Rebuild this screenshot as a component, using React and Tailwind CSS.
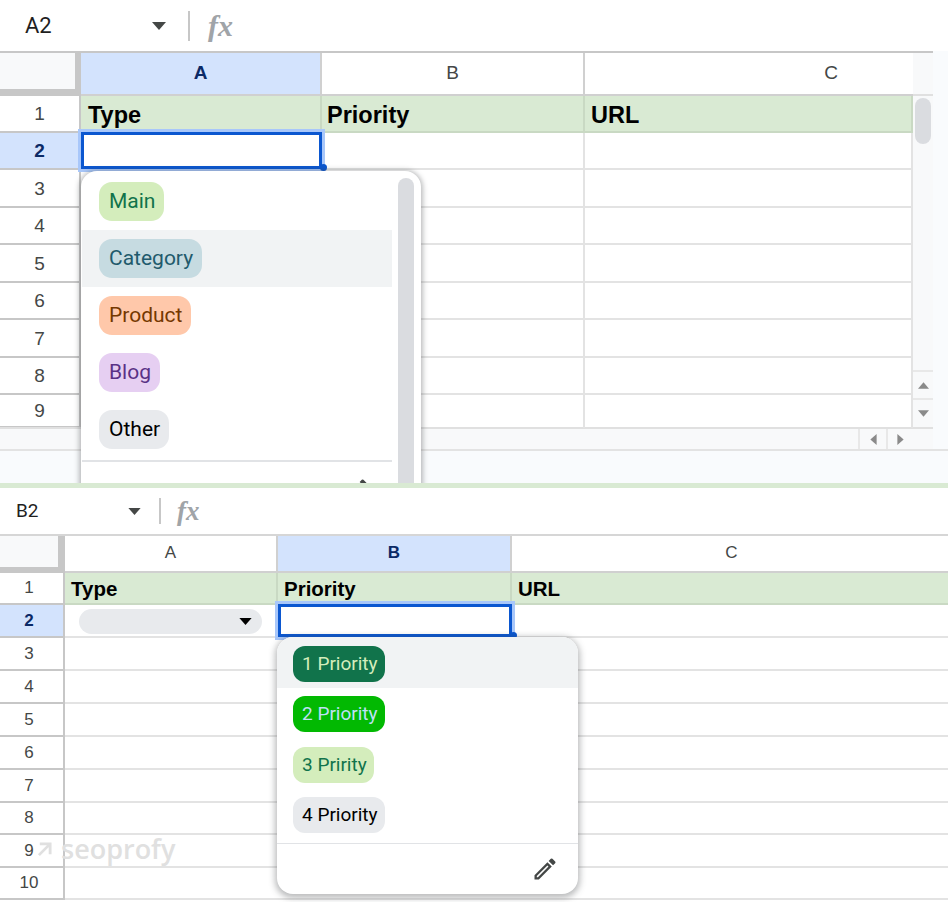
const sans = "font-['Roboto',sans-serif]";
const arial = "font-['Liberation_Sans',Arial,sans-serif]";

const topRows = [
  { n: 1, h: "h-[37px]" },
  { n: 2, h: "h-[37px]" },
  { n: 3, h: "h-[38px]" },
  { n: 4, h: "h-[37px]" },
  { n: 5, h: "h-[38px]" },
  { n: 6, h: "h-[37px]" },
  { n: 7, h: "h-[38px]" },
  { n: 8, h: "h-[37px]" },
  { n: 9, h: "h-[33px]" },
];

const bottomRows = [
  { n: 1, h: "h-[32px]" },
  { n: 2, h: "h-[33px]" },
  { n: 3, h: "h-[33px]" },
  { n: 4, h: "h-[33px]" },
  { n: 5, h: "h-[33px]" },
  { n: 6, h: "h-[33px]" },
  { n: 7, h: "h-[33px]" },
  { n: 8, h: "h-[32px]" },
  { n: 9, h: "h-[33px]" },
  { n: 10, h: "h-[32px]" },
];

const typeOptions = [
  { label: "Main", chip: "bg-[#d4edbc] text-[#11734b]" },
  { label: "Category", chip: "bg-[#c6dbe1] text-[#215a6c]", hover: true },
  { label: "Product", chip: "bg-[#ffc8aa] text-[#753800]" },
  { label: "Blog", chip: "bg-[#e6cff2] text-[#5a3286]" },
  { label: "Other", chip: "bg-[#e8eaed] text-black" },
];

const priorityOptions = [
  { label: "1 Priority", chip: "bg-[#11734b] text-[#d4edbc]", hover: true },
  { label: "2 Priority", chip: "bg-[#02b902] text-[#bfe1f6]" },
  { label: "3 Pririty", chip: "bg-[#d4edbc] text-[#11734b]" },
  { label: "4 Priority", chip: "bg-[#e8eaed] text-black" },
];

function Caret({ className, fill = "#444746" }) {
  return (
    <svg viewBox="0 0 14 8" className={className}>
      <polygon points="0,0 14,0 7,8" fill={fill} />
    </svg>
  );
}

function PencilIcon({ className }) {
  return (
    <svg viewBox="0 0 24 24" className={className} fill="#444746">
      <path d="M3 17.25V21h3.75L17.81 9.94l-3.75-3.75L3 17.25zM5.92 19H5v-.92l9.06-9.06.92.92L5.92 19zM20.71 5.63l-2.34-2.34a.996.996 0 0 0-1.41 0l-1.83 1.83 3.75 3.75 1.83-1.83a.996.996 0 0 0 0-1.41z" />
    </svg>
  );
}

function FormulaBar({ name, height, nameBox, nameText, caretGap, fxText, divider }) {
  return (
    <div className={`flex items-center bg-white shrink-0 ${height}`}>
      <div className={`flex items-center ${nameBox}`}>
        <span className={`${sans} text-[#1f1f1f] ${nameText}`}>{name}</span>
      </div>
      <Caret className={`shrink-0 ${caretGap}`} />
      <div className={`bg-[#c7c7c7] w-[2px] shrink-0 ${divider}`} />
      <span className={`font-['Liberation_Serif',serif] italic font-bold text-[#a0a4a8] ${fxText}`}>fx</span>
    </div>
  );
}

function Selection({ className }) {
  return (
    <div className={`absolute left-0 -top-[1px] -bottom-[1px] z-10 border-[3px] border-[#0b57d0] ring-[3px] ring-[#a8c7fa] bg-white ${className}`}>
      <div className="absolute -right-[8px] -bottom-[5px] w-[7px] h-[7px] rounded-full bg-[#0b57d0]" />
    </div>
  );
}

function Chip({ option, className }) {
  return <span className={`inline-flex items-center ${sans} ${option.chip} ${className}`}>{option.label}</span>;
}

function TypeDropdown() {
  return (
    <div className="absolute left-[81px] top-[171px] z-20 w-[340px] h-[340px] bg-white rounded-2xl shadow-[0_1px_5px_2px_rgba(60,64,67,0.35)] flex">
      <div className="w-[310px] pt-[2px] ml-[1px]">
        {typeOptions.map((o) => (
          <div key={o.label} className={`h-[57px] flex items-center pl-[17px] ${o.hover ? "bg-[#f1f3f4]" : ""}`}>
            <Chip option={o} className="h-[39px] pl-[10px] pr-[9px] rounded-[13px] text-[21px]" />
          </div>
        ))}
        <div className="mt-[2px] border-t-2 border-[#e1e3e6] h-[60px] relative">
          <PencilIcon className="absolute right-[22px] top-[14px] w-[28px] h-[28px]" />
        </div>
      </div>
      <div className="ml-[6px] mt-[7px] w-[16px] h-[330px] rounded-lg bg-[#dadce0]" />
    </div>
  );
}

function PriorityDropdown() {
  return (
    <div className="absolute left-[277px] top-[149px] z-20 w-[301px] h-[257px] bg-white rounded-2xl shadow-[0_2px_6px_2px_rgba(60,64,67,0.35)] flex flex-col overflow-hidden">
      {priorityOptions.map((o) => (
        <div key={o.label} className={`h-[50.5px] flex items-center pl-[16px] pt-[3px] ${o.hover ? "bg-[#f1f3f4]" : ""}`}>
          <Chip option={o} className="h-[36px] pl-[9px] pr-[7px] rounded-[12px] text-[19px]" />
        </div>
      ))}
      <div className="mt-[4px] border-t border-[#e1e3e6] flex-1 flex items-center justify-end pr-[19px]">
        <PencilIcon className="w-[28px] h-[28px]" />
      </div>
    </div>
  );
}

function TopSheet() {
  const cols = [
    { w: "w-[241px]", pl: "pl-[7px]", name: "Type" },
    { w: "w-[263px]", pl: "pl-[5px]", name: "Priority" },
    { w: "w-[328px]", pl: "pl-[6px]", name: "URL" },
  ];
  return (
    <div className="relative h-[483px] overflow-hidden bg-[#f9fbfd] flex flex-col">
      <FormulaBar
        name="A2"
        height="h-[51px]"
        nameBox="w-[152px] pl-[25px]"
        nameText="text-[22px]"
        caretGap="w-[14px] h-[8px] mr-[22px]"
        divider="h-[30px] mr-[18px]"
        fxText="text-[30px]"
      />
      <div className="flex flex-1 min-h-0 border-t-2 border-[#c7c7c7] mr-[15px]">
        <div className="w-[913px] shrink-0 bg-white">
          <div className={`flex h-[43px] ${arial}`}>
            <div className="w-[81px] bg-[#c7c7c7] h-full">
              <div className="w-[75px] h-[36px] bg-[#f8f9fa]" />
            </div>
            <div className={`${cols[0].w} bg-[#d3e3fd] border-r-2 border-b-2 border-[#d0d0d0] flex items-center justify-center font-bold text-[#0b2a66] text-[19px]`}>A</div>
            <div className={`${cols[1].w} border-r-2 border-b-2 border-[#d0d0d0] flex items-center justify-center text-[#444746] text-[19px]`}>B</div>
            <div className={`${cols[2].w} border-b-2 border-[#d0d0d0] flex items-center justify-center text-[#444746] text-[19px]`}>
              <span className="ml-[164px]">C</span>
            </div>
          </div>
          {topRows.map((r) => (
            <div key={r.n} className={`flex ${r.h} ${arial}`}>
              <div className={`w-[81px] shrink-0 flex items-center justify-center pt-[2px] border-r-2 border-b-2 border-[#c7c7c7] text-[19px] ${r.n === 2 ? "bg-[#d3e3fd] font-bold text-[#0b2a66]" : "bg-white text-[#444746]"}`}>
                {r.n}
              </div>
              {cols.map((c, i) => (
                <div
                  key={c.name}
                  className={`${c.w} ${c.pl} relative flex items-end border-r-2 ${r.n === 1 ? "bg-[#d9ead3] border-[#c9d9c3] border-b-2 font-bold text-black text-[23.5px] leading-[32px]" : `border-[#e3e3e3] ${r.n === 9 ? "" : "border-b-2"}`}`}
                >
                  {r.n === 1 && c.name}
                  {r.n === 2 && i === 0 && <Selection className="-right-[2px]" />}
                </div>
              ))}
            </div>
          ))}
        </div>
        <div className="w-[20px] bg-[#f8f9fa] flex flex-col">
          <div className="h-[43px] border-b-2 border-[#e0e0e0]" />
          <div className="mx-[2px] mt-[2px] h-[46px] rounded-lg bg-[#dadce0]" />
          <div className="flex-1" />
          <div className="h-[28px] border-t-2 border-[#e8e8e8] flex items-center justify-center">
            <Caret className="w-[11px] h-[7px] rotate-180" fill="#8a8a8a" />
          </div>
          <div className="h-[29px] border-t-2 border-[#e8e8e8] flex items-center justify-center">
            <Caret className="w-[11px] h-[7px]" fill="#8a8a8a" />
          </div>
        </div>
      </div>
      <div className="h-[22px] shrink-0 flex mr-[15px] bg-[#f8f9fa] border-t-2 border-[#e0e0e0]">
        <div className="w-[858px]" />
        <div className="w-[28px] border-l-2 border-[#e8e8e8] flex items-center justify-center">
          <Caret className="w-[11px] h-[7px] rotate-90" fill="#8a8a8a" />
        </div>
        <div className="w-[27px] border-l-2 border-[#e8e8e8] flex items-center justify-center">
          <Caret className="w-[11px] h-[7px] -rotate-90" fill="#8a8a8a" />
        </div>
      </div>
      <div className="h-[34px] shrink-0 border-t-2 border-[#e3e3e3]" />
      <TypeDropdown />
    </div>
  );
}

function BottomSheet() {
  const cols = [
    { w: "w-[213px]", border: "border-r-2", name: "Type" },
    { w: "w-[234px]", border: "border-r-2", name: "Priority" },
    { w: "w-[436px]", border: "", name: "URL" },
  ];
  return (
    <div className="relative h-[414px] overflow-hidden bg-white flex flex-col">
      <FormulaBar
        name="B2"
        height="h-[46px]"
        nameBox="w-[128px] pl-[16px]"
        nameText="text-[19px]"
        caretGap="w-[13px] h-[7px] mr-[18px]"
        divider="h-[26px] mr-[16px]"
        fxText="text-[27px]"
      />
      <div className="border-t-2 border-[#d6d6d6]">
        <div className={`flex h-[37px] ${arial}`}>
          <div className="w-[65px] bg-[#c7c7c7] h-full">
            <div className="w-[58px] h-[31px] bg-[#f8f9fa]" />
          </div>
          <div className={`${cols[0].w} border-r-2 border-b-2 border-[#d0d0d0] flex items-center justify-center pb-[2px] text-[#444746] text-[17px]`}>A</div>
          <div className={`${cols[1].w} bg-[#d3e3fd] border-r-2 border-b-2 border-[#d0d0d0] flex items-center justify-center pb-[2px] font-bold text-[#0b2a66] text-[17px]`}>B</div>
          <div className={`${cols[2].w} border-b-2 border-[#d0d0d0] flex items-center justify-center pb-[2px] text-[#444746] text-[17px]`}>
            <span className="ml-[3px]">C</span>
          </div>
        </div>
        {bottomRows.map((r) => (
          <div key={r.n} className={`flex ${r.h} ${arial}`}>
            <div className={`w-[65px] shrink-0 flex items-center justify-center pr-[5px] border-r-2 border-b-2 border-[#c7c7c7] text-[17px] ${r.n === 2 ? "bg-[#d3e3fd] font-bold text-[#0b2a66]" : "bg-white text-[#444746]"}`}>
              {r.n}
            </div>
            {cols.map((c, i) => (
              <div
                key={c.name}
                className={`${c.w} relative flex items-center pl-[6px] ${r.n === 1 ? `bg-[#d9ead3] ${c.border} border-b-2 border-[#c9d9c3] font-bold text-black text-[20.5px] pt-[2px]` : "border-b-2 border-[#e3e3e3]"}`}
              >
                {r.n === 1 && c.name}
                {r.n === 2 && i === 0 && (
                  <div className="ml-[8px] mt-[1px] w-[183px] h-[25px] rounded-full bg-[#e8eaed] flex items-center justify-end pr-[10px]">
                    <Caret className="w-[13px] h-[7px]" fill="#000000" />
                  </div>
                )}
                {r.n === 2 && i === 1 && <Selection className="right-0" />}
              </div>
            ))}
          </div>
        ))}
      </div>
      <PriorityDropdown />
      <div className="absolute left-[37px] top-[344px] z-10 flex items-center gap-[9px] text-[#e0e0e0]">
        <svg viewBox="0 0 16 16" className="w-[15px] h-[15px]" fill="none" stroke="currentColor" strokeWidth="3">
          <path d="M3 2h11v11M14 2 2 14" />
        </svg>
        <span className="font-['Open_Sans',sans-serif] font-semibold text-[27px] leading-[34px]">seoprofy</span>
      </div>
    </div>
  );
}

export default function App() {
  return (
    <div className="w-[948px] h-[902px] overflow-hidden bg-white">
      <TopSheet />
      <div className="h-[5px] bg-[#d9ead3]" />
      <BottomSheet />
    </div>
  );
}
